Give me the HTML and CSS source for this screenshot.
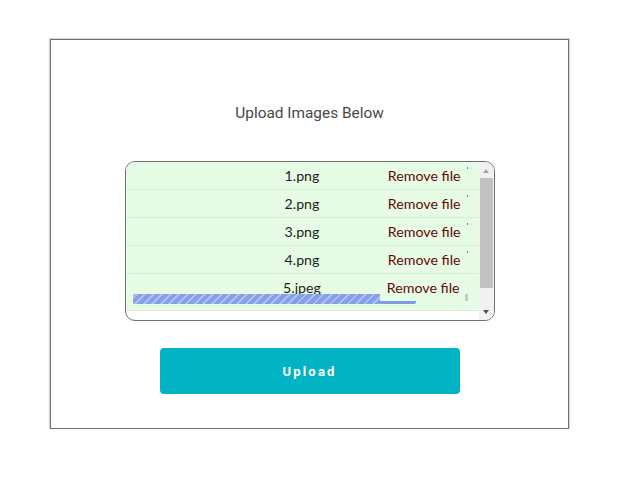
FILE: index.html
```html
<!DOCTYPE html>
<html>
<head>
<meta charset="utf-8">
<link rel="stylesheet" href="styles.css">
</head>
<body>
<div class="card">
  <h1 class="title">Upload Images Below</h1>
  <div class="list">
    <div class="list-content">
      <div class="row"><span class="name">1.png</span><span class="act"><span class="remove">Remove file</span><span class="mark"></span></span></div>
      <div class="row"><span class="name">2.png</span><span class="act"><span class="remove">Remove file</span><span class="mark"></span></span></div>
      <div class="row"><span class="name">3.png</span><span class="act"><span class="remove">Remove file</span><span class="mark"></span></span></div>
      <div class="row"><span class="name">4.png</span><span class="act"><span class="remove">Remove file</span><span class="mark"></span></span></div>
      <div class="row row-last"><span class="name">5.jpeg</span><span class="act"><span class="remove">Remove file</span><span class="mark mark-gray"></span></span>
        <div class="progress"><div class="progress-fill" style="width:247px"></div></div>
      </div>
    </div>
    <div class="scrollbar">
      <div class="arrow arrow-up"></div>
      <div class="track"><div class="thumb"></div></div>
      <div class="arrow arrow-down"></div>
    </div>
  </div>
  <button class="upload">Upload</button>
</div>
</body>
</html>
```
FILE: styles.css
```css
html, body { margin: 0; padding: 0; background: #fff; }
body { padding: 39px 0 0 50px; }

.card {
  width: 517px;
  height: 388px;
  border: 1px solid #707070;
  box-shadow: 0 0 1px 1px #d8d8d8;
  display: flex;
  flex-direction: column;
  align-items: center;
}

.title {
  margin: 63px 0 0 0;
  font-family: Roboto, "Liberation Sans", sans-serif;
  font-weight: 400;
  font-size: 15.4px;
  line-height: 20px;
  color: #474747;
}

.list {
  margin-top: 38px;
  width: 368px;
  height: 158px;
  border: 1px solid #6f6f6f;
  border-radius: 10px;
  overflow: hidden;
  display: flex;
  background: #fff;
}

.list-content {
  width: 353px;
  display: flex;
  flex-direction: column;
}

.row {
  height: 27px;
  border-bottom: 1px solid #d9eed8;
  background: #e7fce4;
  display: grid;
  grid-template-columns: 1fr auto 1fr;
  font-family: Lato, "Open Sans", sans-serif;
  font-size: 14.2px;
  line-height: 27px;
  position: relative;
}
.row-last {
  height: 36px;
  border-bottom: 1px solid #e2e2e2;
}
.name {
  grid-column: 2;
  color: #1e1e1e;
  text-align: center;
}
.act {
  grid-column: 3;
  display: flex;
  justify-content: flex-end;
  align-items: flex-start;
  padding-right: 11px;
}
.remove { color: #640808; }
.mark {
  width: 1px;
  height: 2px;
  background: #3aa36a;
  margin: 5px 0 0 6px;
}
.mark-gray {
  width: 3px;
  height: 7px;
  background: #c8c8c8;
  margin: 20px 0 0 5px;
}

.progress {
  position: absolute;
  left: 7px;
  top: 20px;
  width: 283px;
  height: 10px;
  background: linear-gradient(to bottom, transparent 0 7px, #809be6 7px 10px);
  border-radius: 2px;
}
.progress-fill {
  height: 10px;
  background: repeating-linear-gradient(-45deg, #86a0e8 0 4px, #adc0f1 4px 6px);
  border-radius: 2px 0 0 2px;
}

.scrollbar {
  width: 15px;
  background: #f1f1f1;
  display: flex;
  flex-direction: column;
}
.arrow {
  height: 16px;
  position: relative;
}
.arrow::after {
  content: "";
  position: absolute;
  left: 4px;
  width: 0;
  height: 0;
  border-left: 3.5px solid transparent;
  border-right: 3.5px solid transparent;
}
.arrow-up::after {
  top: 7px;
  border-bottom: 4px solid #a3a3a3;
}
.arrow-down::after {
  top: 6px;
  border-top: 4px solid #505050;
}
.track {
  flex: 1;
  display: flex;
  flex-direction: column;
  padding: 0 1px;
}
.thumb {
  height: 110px;
  background: #c1c1c1;
}

.upload {
  margin-top: 27px;
  width: 300px;
  height: 46px;
  border: none;
  border-radius: 4px;
  background: #02b3c4;
  color: #fff;
  font-family: Roboto, "Liberation Sans", sans-serif;
  font-weight: 700;
  font-size: 13px;
  letter-spacing: 2.2px;
  padding: 0;
}
```
